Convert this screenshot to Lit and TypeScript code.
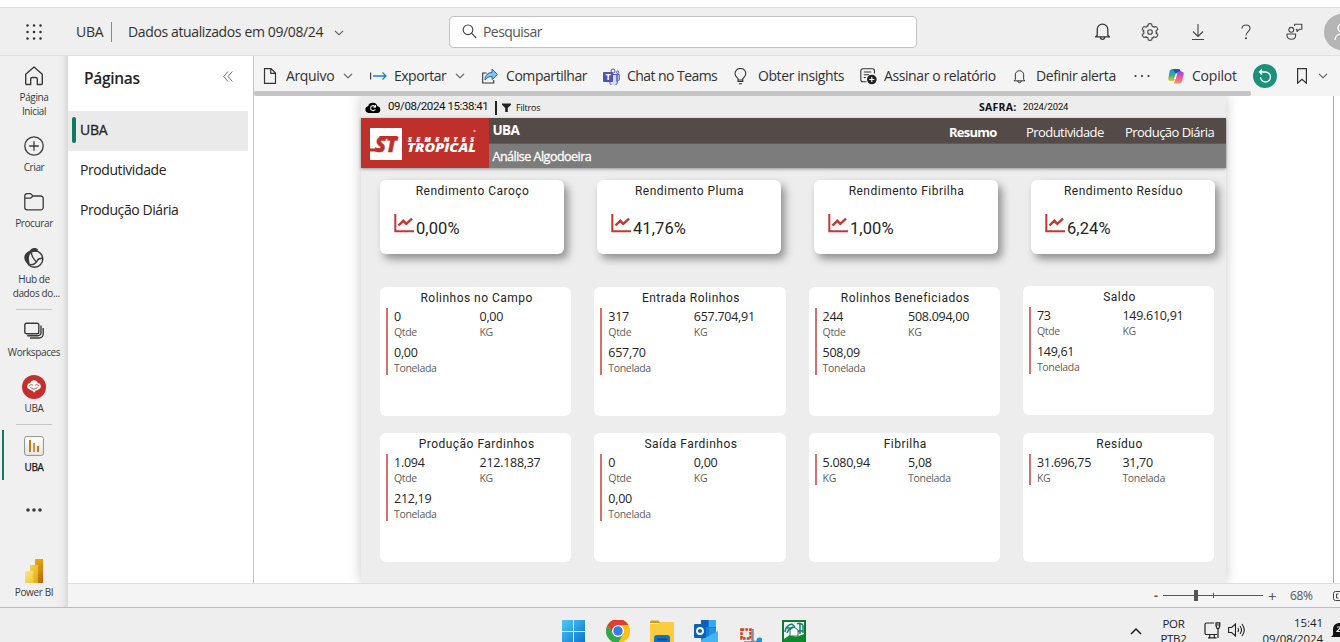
import { LitElement, html, css, svg, nothing } from "lit";
import { customElement, property } from "lit/decorators.js";

const chevron = html`<svg width="10" height="6" viewBox="0 0 10 6" fill="none" stroke="#555" stroke-width="1.1"><path d="M1 .8 5 4.8 9 .8" /></svg>`;
const bell = (s: number) => html`<svg width=${s} height=${s} viewBox="0 0 18 18" fill="none" stroke="#333" stroke-width="1.2"><path d="M4 12.6V7a5 5 0 0 1 10 0v5.6l1.6 1.6H2.4zM7 14.4a2 2 0 0 0 4 0" stroke-linejoin="round" /></svg>`;

const gear = () => {
  const pts: string[] = [];
  for (let i = 0; i < 6; i++) {
    const a = (i * 60 - 90) * Math.PI / 180;
    const p = (r: number, d: number) => `${(9 + r * Math.cos(a + d)).toFixed(2)} ${(9 + r * Math.sin(a + d)).toFixed(2)}`;
    pts.push(`${i ? "L" : "M"}${p(6.1, -0.36)}L${p(8.2, -0.2)}Q${p(8.7, 0)} ${p(8.2, 0.2)}L${p(6.1, 0.36)}Q${p(5.9, 0.52)} ${p(6.9, 0.62)}`);
  }
  return pts.join("") + "Z";
};

@customElement("nav-item")
export class NavItem extends LitElement {
  @property() label = "";
  @property({ type: Boolean, reflect: true }) selected = false;
  static styles = css`
    :host { display: flex; flex-direction: column; align-items: center; width: 68px; height: 56px; flex: none; box-sizing: border-box; padding-top: 10px; position: relative; color: #3b3a39; }
    .icon { height: 20px; display: flex; align-items: center; justify-content: center; }
    .label { margin-top: 4px; font-size: 10px; line-height: 14px; text-align: center; white-space: pre; letter-spacing: -0.38px; }
    :host([selected]) .label { color: #111; -webkit-text-stroke: 0.25px #111; }
    .bar { position: absolute; left: 2px; top: 4px; width: 2px; height: 50px; background: #117865; }
  `;
  render() {
    return html`${this.selected ? html`<div class="bar"></div>` : nothing}
      <div class="icon"><slot></slot></div><div class="label">${this.label}</div>`;
  }
}

@customElement("rate-card")
export class RateCard extends LitElement {
  @property() heading = "";
  @property() value = "";
  static styles = css`
    :host { display: block; width: 184px; height: 74px; border-radius: 6px; background: #fff; box-shadow: 4px 5px 8px rgba(0,0,0,.4); color: #252423; font-family: Roboto, sans-serif; }
    .h { text-align: center; font-size: 12px; line-height: 14px; padding: 4px 0 0 1px; letter-spacing: .48px; }
    .r { display: flex; padding: 15px 0 0 14px; gap: 2px; }
    .v { font-size: 16.5px; line-height: 20px; padding-top: 6px; letter-spacing: .08px; }
    svg { flex: none; }
  `;
  render() {
    return html`<div class="h">${this.heading}</div>
      <div class="r"><svg width="20" height="20" viewBox="0 0 20 20" fill="none" stroke="#c9352f"><path d="M1.3 1v17.3H20" stroke-width="2" /><path d="M4.5 12.5 9.3 7.8l3 3L18 5.6" stroke-width="2.4" /></svg><span class="v">${this.value}</span></div>`;
  }
}

type Pair = [string, string];

@customElement("metric-card")
export class MetricCard extends LitElement {
  @property() heading = "";
  @property({ attribute: false }) items: Pair[] = [];
  static styles = css`
    :host { display: block; height: 129px; border-radius: 6px; background: #fff; color: #252423; }
    .h { text-align: center; font: 12px/14px Roboto, sans-serif; letter-spacing: .48px; padding: 4px 0 3px 2px; }
    .g { margin-left: 6px; border-left: 2px solid #d4706e; display: grid; grid-template-columns: 85.5px 1fr; row-gap: 5px; padding: 0 0 0 6px; width: 170px; }
    .v { font-size: 12.5px; line-height: 16px; letter-spacing: -.27px; padding-top: 1px; }
    .l { font-size: 10.5px; line-height: 13px; color: #605e5c; letter-spacing: -.33px; padding-top: 1px; }
  `;
  render() {
    return html`<div class="h">${this.heading}</div>
      <div class="g">${this.items.map(([v, l]) => html`<div><div class="v">${v}</div><div class="l">${l}</div></div>`)}</div>`;
  }
}

const rates: Pair[] = [
  ["Rendimento Caroço", "0,00%"], ["Rendimento Pluma", "41,76%"],
  ["Rendimento Fibrilha", "1,00%"], ["Rendimento Resíduo", "6,24%"],
];
const q = (a: string, b: string, c: string): Pair[] => [[a, "Qtde"], [b, "KG"], [c, "Tonelada"]];
const metrics: { h: string; items: Pair[]; up?: boolean }[] = [
  { h: "Rolinhos no Campo", items: q("0", "0,00", "0,00") },
  { h: "Entrada Rolinhos", items: q("317", "657.704,91", "657,70") },
  { h: "Rolinhos Beneficiados", items: q("244", "508.094,00", "508,09") },
  { h: "Saldo", items: q("73", "149.610,91", "149,61"), up: true },
  { h: "Produção Fardinhos", items: q("1.094", "212.188,37", "212,19") },
  { h: "Saída Fardinhos", items: q("0", "0,00", "0,00") },
  { h: "Fibrilha", items: [["5.080,94", "KG"], ["5,08", "Tonelada"]] },
  { h: "Resíduo", items: [["31.696,75", "KG"], ["31,70", "Tonelada"]] },
];

@customElement("app-root")
export class AppRoot extends LitElement {
  static styles = css`
    :host { display: flex; flex-direction: column; width: 1340px; height: 642px; overflow: hidden; background: #fff; font-family: "Open Sans", "Noto Sans", sans-serif; color: #323130; }
    * { box-sizing: border-box; }
    svg { display: block; flex: none; }
    .strip { height: 7px; flex: none; }
    .top { height: 49px; flex: none; background: #efefef; border-top: 1px solid #dedede; border-bottom: 1px solid #e0e0e0; display: flex; align-items: center; font-size: 14px; white-space: nowrap; }
    .top > div { flex: none; }
    .waffle { width: 76px; padding-left: 26px; }
    .brand { width: 36px; letter-spacing: -.3px; border-right: 1px solid #8a8a8a; height: 20px; line-height: 20px; }
    .upd { width: 222px; padding-left: 16px; letter-spacing: -.37px; }
    .chev { width: 115px; padding-top: 2px; }
    .search { width: 468px; height: 32px; background: #fff; border: 1px solid #c4c4c4; border-radius: 4px; display: flex; align-items: center; padding-left: 12px; gap: 6px; color: #555; letter-spacing: -.55px; }
    .tops { width: 423px; display: flex; padding-left: 161px; }
    .tops div { width: 48px; height: 36px; flex: none; display: flex; align-items: center; justify-content: center; }
    .tops .av { width: 36px; border-radius: 50%; background: #b5b5b5; margin-left: 6px; }
    .main { display: flex; height: 551px; flex: none; }
    .nav { width: 68px; flex: none; background: linear-gradient(90deg, #f0f0f0 56px, #ececec 62px, #d9d9d9 68px); display: flex; flex-direction: column; }
    .tall { height: 70px; }
    .div { height: 1px; width: 36px; margin: 1px 16px; background: #c8c6c4; flex: none; }
    .body { flex: 1; min-width: 0; display: flex; flex-direction: column; }
    .cols { display: flex; height: 527px; }
    .pane { width: 186px; flex: none; border-right: 1px solid #c3c3c3; background: #fff; font-size: 14px; }
    .ph { display: flex; height: 55px; padding: 11px 20px 0 16px; justify-content: space-between; font-weight: 600; font-size: 15.5px; line-height: 23px; letter-spacing: -.3px; color: #252423; }
    .ph svg { margin-top: 4px; }
    .pi { height: 40px; width: 180px; line-height: 38px; padding-left: 12px; letter-spacing: -.42px; color: #252423; }
    .pi.on { background: #eaeaea; padding-left: 4px; display: flex; gap: 4px; -webkit-text-stroke: .3px #252423; letter-spacing: -.3px; }
    .pi i { width: 4px; height: 26px; margin-top: 6px; border-radius: 2px; background: #117865; }
    .work { flex: 1; min-width: 0; overflow: hidden; display: flex; flex-direction: column; }
    .tb { height: 35px; flex: none; background: #f4f4f4; display: flex; align-items: center; padding-left: 8px; font-size: 14px; white-space: nowrap; padding-top: 5px; }
    .tb > div { display: flex; align-items: center; flex: none; }
    .ic { width: 24px; display: flex; flex: none; }
    .tx { flex: none; margin-top: -1px; }
    .arr { margin-left: auto; margin-right: 17px; }
    .sb { height: 5px; flex: none; background: #f4f4f4; }
    .sb div { width: 997px; height: 5px; background: #c4c4c4; border-radius: 2px; }
    .canvas { flex: 1; min-height: 0; display: flex; background: #fff; padding-left: 107px; width: 1080px; border-right: 1px solid #ababab; overflow: hidden; }
    .page { width: 865px; height: 487px; background: #ededed; box-shadow: 0 0 12px rgba(0,0,0,.22); flex: none; }
    .info { height: 22px; display: flex; align-items: center; color: #111; white-space: nowrap; }
    .info > div { flex: none; }
    .cloud { width: 27px; padding-left: 4px; }
    .dt { font: 11.5px/20px Roboto, sans-serif; width: 107px; letter-spacing: -.42px; height: 22px; }
    .sep { width: 2px; height: 14px; background: #222; margin-right: 5px; margin-top: 1px; }
    .fl { font-size: 9px; width: 468px; padding-left: 5px; letter-spacing: -.2px; }
    .sf { font-size: 10.5px; font-weight: 700; width: 44px; letter-spacing: .25px; }
    .sy { font: 9.5px Roboto, sans-serif; letter-spacing: -.15px; padding-bottom: 1px; }
    .ban { height: 50px; display: flex; box-shadow: 0 1px 3px rgba(0,0,0,.4); color: #fff; white-space: nowrap; }
    .logo { width: 128px; background: #c0302a; }
    .bb { flex: 1; }
    .b1 { height: 26px; background: #544a47; border-bottom: 1px solid #5f5b59; display: flex; padding-left: 3.5px; font-size: 13px; }
    .b1 > div { flex: none; }
    .b1 .t { font-weight: 700; width: 456.5px; line-height: 24px; letter-spacing: -.6px; font-size: 13.5px; }
    .b1 .n { line-height: 28px; }
    .b1 .n1 { width: 77px; font-weight: 700; letter-spacing: -.75px; }
    .b1 .n2 { width: 99px; letter-spacing: -.56px; }
    .b1 .n3 { letter-spacing: -.54px; }
    .b2 { height: 24px; background: #7c7c7c; padding-left: 3.5px; line-height: 25px; font-size: 12.5px; letter-spacing: -.5px; -webkit-text-stroke: .3px #fff; }
    .rates { display: flex; gap: 33px; padding: 12px 0 0 19px; }
    .mets { display: grid; grid-template-columns: repeat(4, 191.3px); gap: 17px 23px; padding: 33px 0 0 19px; }
    .up { margin-top: -1px; margin-bottom: 1px; }
    .foot { height: 24px; border-top: 1px solid #dedede; background: #f4f4f4; display: flex; align-items: center; justify-content: flex-end; font-size: 12px; color: #555; }
    .minus { width: 9px; font-weight: 700; }
    .track { margin-top: -2px; }
    .plus { width: 26px; padding-left: 5px; font-size: 15px; line-height: 20px; }
    .pct { width: 43px; letter-spacing: -.3px; padding-left: 1px; }
    .task { height: 35px; flex: none; border-top: 1px solid #bcbcbc; background: #eee; display: flex; padding-left: 562px; overflow: hidden; font-size: 11px; color: #222; }
    .task > div { flex: none; }
    .app { width: 44px; padding-top: 12px; }
    .gap { width: 316px; display: flex; justify-content: flex-end; padding-top: 20px; }
    .lang { width: 62px; text-align: center; line-height: 15px; padding: 8px 0 0 1px; font-size: 11.5px; letter-spacing: -.3px; }
    .net { width: 24px; padding-top: 14px; }
    .clock { width: 71px; text-align: right; line-height: 16px; padding-top: 7px; font-size: 11.5px; letter-spacing: -.05px; white-space: nowrap; }
    .z { padding: 15px 0 0 8px; }
    .dots { margin-top: 16px; }
    .pbi { margin-top: 13px; }
    .pbi svg { margin-top: -1px; }
  `;

  tool(icon: unknown, text: string, w: number, ls: string, arrow = false) {
    return html`<div style="width:${w}px"><span class="ic">${icon}</span><span class="tx" style="letter-spacing:${ls}px">${text}</span>${arrow ? html`<span class="arr">${chevron}</span>` : nothing}</div>`;
  }

  render() {
    return html`
      <div class="strip"></div>
      <div class="top">
        <div class="waffle"><svg width="16" height="16" fill="#333">${[1.5, 8, 14.5].map(y => [1.5, 8, 14.5].map(x => svg`<circle cx=${x} cy=${y} r="1.25"/>`))}</svg></div>
        <div class="brand">UBA</div><div class="upd">Dados atualizados em 09/08/24</div><div class="chev">${chevron}</div>
        <div class="search"><svg width="15" height="15" viewBox="0 0 15 15" fill="none" stroke="#444" stroke-width="1.1"><circle cx="6" cy="5.8" r="4.8" /><path d="M9.5 9.2 14.2 14" /></svg>Pesquisar</div>
        <div class="tops">
          <div>${bell(19)}</div>
          <div><svg width="18" height="18" viewBox="0 0 18 18" fill="none" stroke="#444" stroke-width="1.1" stroke-linejoin="round"><path d=${gear()} /><circle cx="9" cy="9" r="2.3" /></svg></div>
          <div><svg width="14" height="18" fill="none" stroke="#444" stroke-width="1.1"><path d="M7 1v12M2 8.5l5 5 5-5M1 16.5h12" /></svg></div>
          <div><svg width="10" height="16" fill="none" stroke="#444" stroke-width="1.1"><path d="M1 4.5C1 2.2 2.8 1 5 1s4 1.3 4 3.4C9 7.6 5 7.6 5 11.5" /><circle cx="5" cy="14.3" r=".5" fill="#444" /></svg></div>
          <div><svg width="17" height="17" fill="none" stroke="#444" stroke-width="1.1" stroke-linejoin="round"><circle cx="5.300" cy="6.800" r="2.400" /><path d="M1 11h8.600v1.500c0 5-8.600 5-8.600 0zM8.600 3V1.300h7.200v5h-2.400l-2.400 2.200V6.300H9.800" /></svg></div>
          <div class="av"><svg width="16" height="18" viewBox="0 0 16 18" fill="none" stroke="#fff" stroke-width="1.4"><circle cx="8" cy="5" r="4" /><path d="M1 17c0-8 14-8 14 0" /></svg></div>
        </div>
      </div>
      <div class="main">
        <div class="nav">
          <nav-item class="tall" label=${"Página\nInicial"}><svg width="20" height="20" viewBox="0 0 20 20" fill="none" stroke="#3b3a39" stroke-width="1.4" stroke-linejoin="round"><path d="M1.700 8.300 10 1l8.300 7.300v9.200a1 1 0 0 1-1 1h-4V13a1.500 1.500 0 0 0-1.500-1.500H8.200A1.500 1.500 0 0 0 6.700 13v5.500h-4a1 1 0 0 1-1-1z" /></svg></nav-item>
          <nav-item label="Criar"><svg width="20" height="20" fill="none" stroke="#3b3a39" stroke-width="1.3"><circle cx="10" cy="10" r="9.2" /><path d="M10 5.2v9.6M5.2 10h9.6" /></svg></nav-item>
          <nav-item label="Procurar"><svg width="20" height="20" fill="none" stroke="#3b3a39" stroke-width="1.3" stroke-linejoin="round"><path d="M.8 4A2.4 2.4 0 0 1 3.2 1.6h3.4L9 4h7.8A2.4 2.4 0 0 1 19.2 6.400v9A2.400 2.400 0 0 1 16.800 17.900H3.200A2.400 2.400 0 0 1 .8 15.500zM.8 6.200h5.700L9 4" /></svg></nav-item>
          <nav-item class="tall" label=${"Hub de\n  dados do..."}><svg width="20" height="20" viewBox="0 0 20 20" fill="none" stroke="#3b3a39" stroke-width="1.4"><circle cx="10.5" cy="11" r="8.3" /><path d="M6 2.500A5 5 0 0 1 14 1.500L13 4Q9 3 6.500 5.500 3.500 9 6 16.800 0 14 .3 9 .5 5 6 2.500z" fill="#3b3a39" stroke="none" /><path d="M7.500 5c0 5 4 7.500 5 9.300M5.500 16.500c5.500 1 7-2.500 8-4.300s2.500-2 5-2" /></svg></nav-item>
          <div class="div"></div>
          <nav-item label="Workspaces"><svg width="20" height="20" fill="none" stroke="#3b3a39" stroke-width="1.4"><rect x=".8" y="2.200" width="14" height="10.500" rx="1.800" /><path d="M17 4.500v7.200a3 3 0 0 1-3 3H3.200M19.200 7v6a4 4 0 0 1-4 4H6" /></svg></nav-item>
          <nav-item label="UBA"><svg width="24" height="24" viewBox="0 0 24 24"><circle cx="12" cy="12" r="12" fill="#c42f2b" /><path d="M8.200 8a4 4 0 0 1 7.600 0 3.200 3.200 0 0 1 1 6.200q-1.500 1.300-3 1.300L12 17.800l-1.800-2.300q-1.500 0-3-1.300a3.200 3.200 0 0 1 1-6.200z" fill="#fff" /><path d="M7 11q2-2.300 4-.8M17 11q-2-2.300-4-.8M8.300 12.200q3.700 3.600 7.400 0" fill="none" stroke="#c42f2b" stroke-width=".8" /></svg></nav-item>
          <div class="div"></div>
          <nav-item label="UBA" selected><svg width="20" height="20"><defs><linearGradient id="g1" y2="1" x2="0"><stop stop-color="#fff" /><stop offset="1" stop-color="#e6e6e6" /></linearGradient></defs><rect x=".6" y=".6" width="18.800" height="18.800" rx="2" fill="url(#g1)" stroke="#8f8f8f" /><path d="M6 4v12" stroke="#c07c0c" stroke-width="2" /><path d="M10 7v9" stroke="#cf9440" stroke-width="2" /><path d="M14 10v6" stroke="#c07c0c" stroke-width="2" /></svg></nav-item>
          <nav-item><svg class="dots" width="18" height="18" fill="#3b3a39"><circle cx="3" cy="9" r="1.800" /><circle cx="9" cy="9" r="1.800" /><circle cx="15" cy="9" r="1.800" /></svg></nav-item>
          <nav-item class="pbi" label="Power BI"><svg width="20" height="24"><defs><linearGradient id="p1" y2="1" x2=".3"><stop stop-color="#ebb010" /><stop offset="1" stop-color="#be7109" /></linearGradient><linearGradient id="p2" y2="1" x2="1"><stop stop-color="#f6d751" /><stop offset="1" stop-color="#e3a80d" /></linearGradient><linearGradient id="p3" y2="1" x2=".5"><stop stop-color="#f9e68b" /><stop offset="1" stop-color="#f2cf3e" /></linearGradient></defs><path d="M11 0h8v24h-8z" fill="url(#p1)" /><path d="M6 6h8v18H6z" fill="url(#p2)" /><path d="M1 12h8v12H1z" fill="url(#p3)" /></svg></nav-item>
        </div>
        <div class="body">
          <div class="cols">
            <div class="pane">
              <div class="ph">Páginas<svg width="10" height="11" fill="none" stroke="#5f7373" stroke-width="1"><path d="M5 .5.8 5.500 5 10.500M9.300.5 5 5.500l4.300 5" /></svg></div>
              <div class="pi on"><i></i>UBA</div><div class="pi">Produtividade</div><div class="pi">Produção Diária</div>
            </div>
            <div class="work">
              <div class="tb">
                ${this.tool(html`<svg width="16" height="16" fill="none" stroke="#333" stroke-width="1.200"><path d="M2.500.6H9l4.500 4.500v10.300h-11zM8.700.6v4.800h4.800" /></svg>`, "Arquivo", 108, "-.35", true)}
                ${this.tool(html`<svg width="17" height="16" fill="none" stroke-width="1.100"><path d="M.6 4.500v7" stroke="#333" /><path d="M3 8h13M12.500 4.500 16 8l-3.500 3.500" stroke="#1a7fc7" stroke-width="1.300" /></svg>`, "Exportar", 112, "-.5", true)}
                ${this.tool(html`<svg width="17" height="16" fill="none"><path d="M4.500 5H.7v10h11v-3" stroke="#333" stroke-width="1.100" /><path d="M3 12c0-5 3-7.500 7-7.500V1.200L15.500 6.500 10 11.500V8.500C7 8.500 5 9.500 3 12z" fill="#83c3ee" stroke="#1568a8" /></svg>`, "Compartilhar", 121, "-.44")}
                ${this.tool(html`<svg width="17" height="17"><circle cx="10" cy="3" r="2" fill="none" stroke="#5059c9" /><circle cx="14.700" cy="4.200" r="1.200" fill="none" stroke="#5059c9" /><path d="M6 6.500h8v6a3.500 3.500 0 0 1-7 3zM14 6.500h2.300v4.500a2.400 2.400 0 0 1-2.300 2.300z" fill="#d9dbf7" stroke="#5059c9" /><rect x="0" y="4" width="10" height="10" rx="1" fill="#4b53bc" /><text x="5" y="12.200" fill="#fff" font-size="9" font-weight="700" text-anchor="middle">T</text></svg>`, "Chat no Teams", 131, "-.56")}
                ${this.tool(html`<svg width="13" height="17" fill="none" stroke="#333" stroke-width="1.100"><path d="M4 12v-1.500C2.500 9 1 8 1 5.800a5.400 5.400 0 0 1 10.800 0C11.800 8 10.300 9 8.800 10.500V12zM4 12v1.500h4.800V12M4.800 15.700h3.300" /></svg>`, "Obter insights", 126, "-.42")}
                ${this.tool(html`<svg width="17" height="17" fill="none" stroke="#333" stroke-width="1.100"><path d="M6.500 13.800H3Q.8 13.800.8 11.500V3Q.8.800 3 .8h9.500Q14.500.8 14.500 3v2.500M3.800 4h7.500M3.800 6.800H9M3.800 9.500h2" /><circle cx="11.800" cy="11.500" r="4.800" fill="#222" stroke="none" /><path d="M11.800 9v5M9.300 11.500h5" stroke="#fff" /></svg>`, "Assinar o relatório", 152, "-.41")}
                ${this.tool(bell(15), "Definir alerta", 122, "-.4")}
                <div style="width:34px"><svg width="16" height="4" fill="#333"><circle cx="1.500" cy="2" r="1.100" /><circle cx="8" cy="2" r="1.100" /><circle cx="14.500" cy="2" r="1.100" /></svg></div>
                ${this.tool(html`<svg width="16" height="16"><defs><linearGradient id="c1" x2="0" y2="1"><stop stop-color="#1b8fe8" /><stop offset=".5" stop-color="#2cae8c" /><stop offset="1" stop-color="#f2c21c" /></linearGradient><linearGradient id="c2" x2="0" y2="1"><stop stop-color="#8a4fe0" /><stop offset=".5" stop-color="#f0569a" /><stop offset="1" stop-color="#ff9a5c" /></linearGradient></defs><path d="M5 1h5L7 11q-.8 2-2.500 2H2.500Q0 13 .4 10L1.500 3.500Q2 1 5 1z" fill="url(#c1)" /><path d="M5 1h5.500q1.500 0 2 2l.6 1.500H10Q8.500 4.500 8 6z" fill="#1c4fc4" /><path d="M11 15.500H6L9 5.500Q9.700 3.500 11.500 3.500h2Q16 3.500 15.700 6.500L14.200 13q-.6 2.500-3.200 2.500z" fill="url(#c2)" /><path d="M7.800 5.500h1.400L7.800 11H6z" fill="#fff" /></svg>`, "Copilot", 85, "-.2")}
                <div style="width:44px"><svg width="24" height="24" fill="none" stroke="#fff" stroke-width="1.300"><circle cx="12" cy="12" r="12" fill="#1c9079" stroke="none" /><path d="M6.500 8h6a5 5 0 1 1-5 5M9 5.500 6.500 8 9 10.500" /></svg></div>
                <div style="width:21px"><svg width="10" height="16" fill="none" stroke="#333" stroke-width="1.200"><path d="M.6.6h8.800v14.600L5 11.200.6 15.200z" /></svg></div>
                <div>${chevron}</div>
              </div>
              <div class="sb"><div></div></div>
              <div class="canvas">
                <div class="page">
                  <div class="info">
                    <div class="cloud"><svg width="16" height="11"><path d="M3.500 11a3.400 3.400 0 0 1-.5-6.700 5 5 0 0 1 9.500 0A3.400 3.400 0 0 1 12.500 11z" fill="#000" /><path d="M10 4.500a2.500 2.500 0 1 0 .3 2.800M10.500 3v2.300H8.300" fill="none" stroke="#eee" stroke-width="1.100" /></svg></div>
                    <div class="dt">09/08/2024 15:38:41</div><div class="sep"></div>
                    <svg width="9" height="9"><path d="M0 .5h9v1.300L5.800 5v4H3.200V5L0 1.800z" fill="#222" /></svg>
                    <div class="fl">Filtros</div><div class="sf">SAFRA:</div><div class="sy">2024/2024</div>
                  </div>
                  <div class="ban">
                    <div class="logo"><svg width="128" height="50" font-family="Open Sans, sans-serif" font-style="italic" font-weight="800" fill="#fff"><rect x="9" y="10" width="32" height="32" /><path d="M18 18h18.500l-.8 3.800H28l-.4-1H20zM9 30.500h8.500l5-1-.6 4H9z" fill="#c0302a" /><text x="14" y="33.500" font-size="21" textLength="22" lengthAdjust="spacingAndGlyphs" fill="#c0302a" stroke="#c0302a" stroke-width=".5">ST</text><text x="47" y="23.500" font-size="7" textLength="66" stroke="#fff" stroke-width=".2">SEMENTES</text><text x="46" y="34" font-size="12" textLength="69" lengthAdjust="spacingAndGlyphs">TROPICAL</text><circle cx="113.500" cy="13" r="1.200" fill="#e09a97" /></svg></div>
                    <div class="bb">
                      <div class="b1"><div class="t">UBA</div><div class="n n1">Resumo</div><div class="n n2">Produtividade</div><div class="n n3">Produção Diária</div></div>
                      <div class="b2">Análise Algodoeira</div>
                    </div>
                  </div>
                  <div class="rates">${rates.map(([h, v]) => html`<rate-card heading=${h} value=${v}></rate-card>`)}</div>
                  <div class="mets">${metrics.map(m => html`<metric-card class=${m.up ? "up" : ""} heading=${m.h} .items=${m.items}></metric-card>`)}</div>
                </div>
              </div>
            </div>
          </div>
          <div class="foot"><div class="minus">-</div><svg class="track" width="100" height="14"><path d="M0 7.500h100M50.500 5v5" stroke="#555" /><path d="M31 2h4v11h-4z" fill="#555" /></svg><div class="plus">+</div><div class="pct">68%</div><svg width="8" height="10" fill="none" stroke="#444"><path d="M9 .5H3.500a2 2 0 0 0-2 2v5a2 2 0 0 0 2 2H9M6.500 3h-2v4h2" /></svg></div>
        </div>
      </div>
      <div class="task">
        <div class="app"><svg width="23" height="23"><defs><linearGradient id="w" gradientUnits="userSpaceOnUse" x1="0" y1="0" x2="23" y2="23"><stop stop-color="#4fc8f7" /><stop offset="1" stop-color="#0a72d0" /></linearGradient></defs><path d="M0 0h11v11H0zM12 0h11v11H12zM0 12h11v11H0zM12 12h11v11H12z" fill="url(#w)" /></svg></div>
        <div class="app"><svg width="24" height="23" viewBox="0 1 24 23"><circle cx="12" cy="12" r="12" fill="#fbc116" /><path d="M1.600 6A12 12 0 0 1 22.400 6H12L6.800 15z" fill="#e33b2e" /><path d="M1.600 6A12 12 0 0 0 12 24l5.200-9H6.800z" fill="#2da94f" /><circle cx="12" cy="12" r="6" fill="#fff" /><circle cx="12" cy="12" r="4.700" fill="#3a7ae8" /></svg></div>
        <div class="app"><svg width="24" height="24"><path d="M0 2Q0 .5 1.500.5H8L11 3H0z" fill="#d99a0b" /><path d="M0 4h8l2.500-2H23q1 0 1 1v21H0z" fill="#fccb3f" /><path d="M4 24v-6q0-3 3-3h10q3 0 3 3v6z" fill="#1273c4" /><path d="M7 18.500h10v2H7z" fill="#0a4f91" /></svg></div>
        <div class="app"><svg width="24" height="24"><path d="M7 0h15v22H7z" fill="#1580d8" /><path d="M7 0h7v7H7z" fill="#0d61b3" /><path d="M15 0h7v7h-7z" fill="#38a9f0" /><path d="M15 8h7v7h-7z" fill="#2292e3" /><path d="M24 11v12H7v-3z" fill="#45b4f2" /><rect y="4" width="12" height="14" rx="1" fill="#0c62b8" /><circle cx="6" cy="11" r="3" fill="none" stroke="#fff" stroke-width="1.800" /></svg></div>
        <div class="app"><svg width="24" height="24"><path d="M3.500 9.500h9v9h-9z" fill="#eee" stroke="#d13f14" stroke-width="2.600" stroke-dasharray="2.800 1" /><path d="M14.500 9v11q0 2 2 2h5" fill="none" stroke="#8a8e92" stroke-width="2.600" /><circle cx="21.500" cy="20.500" r="3" fill="#1b94dd" /><path d="M6 21h8v3H6z" fill="#9a9ea2" /></svg></div>
        <div class="app"><svg width="24" height="24"><rect x="1" y="1" width="22" height="24" fill="#eef6f2" stroke="#0b7b2c" stroke-width="2" /><path d="M2 19 8 15l6 2 8-3v9H2z" fill="#0b8a2c" /><path d="M3 12q1-7 7-8M5 13q2-5 6-6M10 4l3 3M18 4v10M21 5v8M15 4q3-2 6 1M4 8h4M16 11h5" stroke="#177d74" stroke-width="1.500" fill="none" /><path d="M8 15V10l4-3 4 3v6H8z" fill="#fff" stroke="#147a50" /></svg></div>
        <div class="gap"><svg width="12" height="7" fill="none" stroke="#222" stroke-width="1.500"><path d="M1 6l5-5 5 5" /></svg></div>
        <div class="lang">POR<br />PTB2</div>
        <div class="net"><svg width="17" height="17" fill="none" stroke="#222" stroke-width="1.200"><path d="M10 1H2.500a1.500 1.500 0 0 0-1.500 1.500v8.500A1.500 1.500 0 0 0 2.500 12.500H13M4 15.800h8.500M5.700 13v2.500M10.300 13v2.500M14 7v9M12 .8h3.800v3L14.800 6.500H13L12 3.800zM12 3h4" /></svg></div>
        <div class="net"><svg width="17" height="16" fill="none" stroke="#222" stroke-width="1.100"><path d="M.6 5.500h3L7.500 2v12L3.600 10.500h-3zM9.800 6q1.500 2 0 4M12 4q3 4 0 8M14 2q4.500 6 0 12" /></svg></div>
        <div class="clock">15:41<br />09/08/2024</div>
        <div class="z"><svg width="16" height="16"><path d="M2 12V6a6 6 0 0 1 12 0v6l2 2H0z" fill="#111" /><path d="M6 4h4l-4 4.500h4" fill="none" stroke="#eee" stroke-width="1.200" /></svg></div>
      </div>`;
  }
}
